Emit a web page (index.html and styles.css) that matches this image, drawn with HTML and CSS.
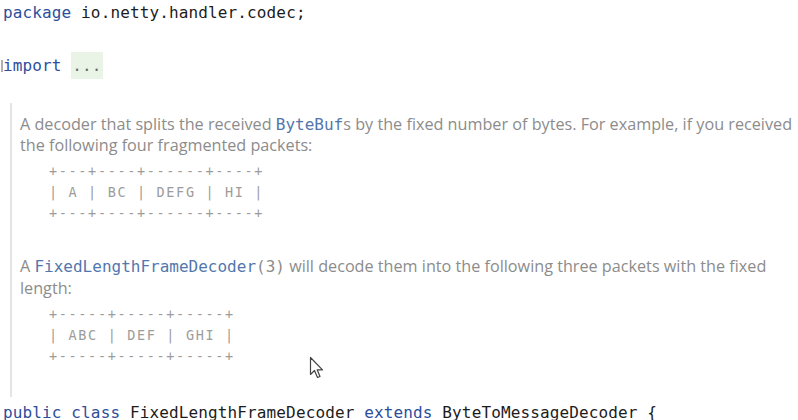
FILE: index.html
```html
<!DOCTYPE html>
<html>
<head>
<meta charset="utf-8">
<link rel="stylesheet" href="styles.css">
</head>
<body>
<div class="editor">
  <div class="line"><span class="kw">package</span> io.netty.handler.codec;</div>
  <div class="line"></div>
  <div class="line"><span class="caret"></span><span class="kw">import</span> <span class="fold">...</span></div>
  <div class="doc">
    <p class="para">A decoder that splits the received <code class="ref">ByteBuf</code>s by the fixed number of bytes. For example, if you received the following four fragmented packets:</p>
<pre class="table">+---+----+------+----+
| A | BC | DEFG | HI |
+---+----+------+----+</pre>
    <p class="para second">A <code class="ref">FixedLengthFrameDecoder</code><code class="plain">(3)</code> will decode them into the following three packets with the fixed length:</p>
<pre class="table tight">+-----+-----+-----+
| ABC | DEF | GHI |
+-----+-----+-----+</pre>
    <svg class="pointer" width="16" height="24" viewBox="0 0 16 24"><path d="M1.5 1.5 L1.5 18.5 L5.5 14.5 L8.5 21.5 L11 20.5 L8.2 13.8 L13.5 13.8 Z" fill="#fff" stroke="#444" stroke-width="1.2" stroke-linejoin="round"/></svg>
  </div>
  <div class="line"><span class="kw">public class</span> FixedLengthFrameDecoder <span class="kw">extends</span> ByteToMessageDecoder {</div>
</div>
</body>
</html>
```
FILE: styles.css
```css
html, body {
  margin: 0;
  padding: 0;
  background: #ffffff;
  overflow: hidden;
}
.editor {
  padding-left: 3px;
  font-family: "DejaVu Sans Mono", monospace;
  font-size: 16px;
  letter-spacing: 0.13px;
  color: #1c1c1c;
}
.line {
  height: 26px;
  line-height: 26px;
  white-space: pre;
  position: relative;
}
.kw {
  color: #2d4e9c;
}
.fold {
  display: inline-block;
  background: #e9f3e6;
  color: #6a6a6a;
  line-height: 27px;
  padding: 0 1px;
}
.caret {
  position: absolute;
  left: -2px;
  top: 8px;
  width: 2px;
  height: 12px;
  background: #b0b0b0;
}
.doc {
  position: relative;
  margin: 25px 0 3px 7px;
  border-left: 2px solid #e4e4e4;
  padding: 11px 0 30px 8px;
  font-family: "Open Sans", sans-serif;
  font-size: 16.2px;
  letter-spacing: 0;
  color: #8c8c8c;
}
.para {
  margin: 0;
  line-height: 21px;
  width: 780px;
}
.para.second {
  margin-top: 31px;
  line-height: 22px;
}
.ref {
  font-family: "DejaVu Sans Mono", monospace;
  font-size: 16px;
  line-height: 1;
  color: #5277ad;
}
.plain {
  font-family: "DejaVu Sans Mono", monospace;
  font-size: 16px;
  line-height: 1;
  color: #8c8c8c;
}
.table {
  margin: 5px 0 0 29px;
  font-family: "DejaVu Sans Mono", monospace;
  font-size: 13.5px;
  letter-spacing: 1.65px;
  line-height: 21px;
  color: #9c9c9c;
}
.table.tight {
  margin-top: 5px;
}
.pointer {
  position: absolute;
  left: 297px;
  top: 253px;
}
```
